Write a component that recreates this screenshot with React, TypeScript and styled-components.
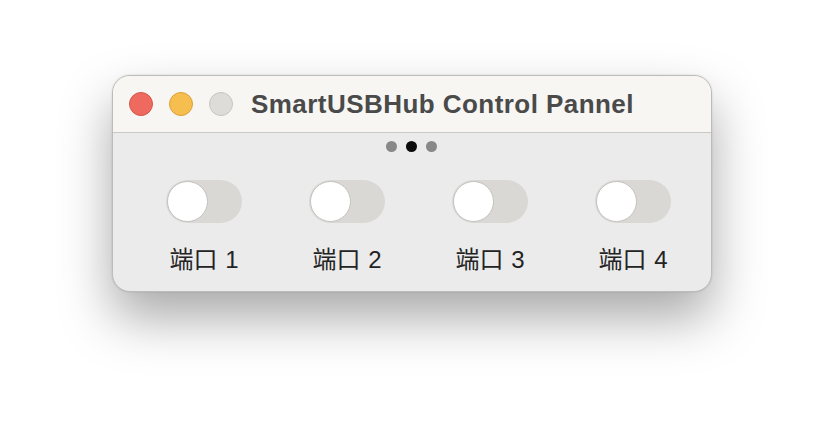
import React, { useState } from 'react';
import styled, { createGlobalStyle } from 'styled-components';

const GlobalStyle = createGlobalStyle`
  html, body {
    margin: 0;
    padding: 0;
    background: #ffffff;
  }
  body {
    font-family: 'Liberation Sans', 'Noto Sans CJK SC', sans-serif;
  }
`;

const Page = styled.div`
  width: 824px;
  height: 440px;
  padding: 75px 0 0 112px;
  box-sizing: border-box;
  overflow: hidden;
`;

const Window = styled.div`
  width: 600px;
  height: 217px;
  box-sizing: border-box;
  border: 1px solid #bdbcba;
  border-radius: 18px;
  overflow: hidden;
  background: #ebebeb;
  box-shadow: 0 26px 52px rgba(0, 0, 0, 0.34), 0 0 2px rgba(0, 0, 0, 0.15);
  display: flex;
  flex-direction: column;
`;

const TitleBar = styled.div`
  height: 56px;
  flex-shrink: 0;
  background: #f7f6f3;
  border-bottom: 1px solid #c9c8c5;
  display: flex;
  align-items: center;
  padding-left: 16px;
`;

const Lights = styled.div`
  display: flex;
  gap: 16px;
  margin-right: 18px;
`;

const Light = styled.span<{ $fill: string; $ring: string }>`
  width: 24px;
  height: 24px;
  border-radius: 50%;
  box-sizing: border-box;
  background: ${(p) => p.$fill};
  border: 1px solid ${(p) => p.$ring};
`;

const Title = styled.div`
  font-family: 'Liberation Sans', sans-serif;
  font-weight: 700;
  font-size: 26px;
  color: #4a4a4a;
  letter-spacing: 0.45px;
`;

const Dots = styled.div`
  display: flex;
  justify-content: center;
  gap: 9px;
  margin-top: 8px;
  padding-right: 2px;
`;

const Dot = styled.span<{ $active?: boolean }>`
  width: 11px;
  height: 11px;
  border-radius: 50%;
  background: ${(p) => (p.$active ? '#0c0c0c' : '#888888')};
`;

const Ports = styled.div`
  display: flex;
  gap: 67px;
  padding-left: 53px;
  margin-top: 28px;
`;

const Port = styled.div`
  width: 76px;
  display: flex;
  flex-direction: column;
  align-items: center;
  gap: 23px;
`;

const Track = styled.button<{ $on: boolean }>`
  width: 76px;
  height: 43px;
  border: none;
  padding: 0;
  border-radius: 22px;
  background: ${(p) => (p.$on ? '#34c759' : '#dad8d4')};
  position: relative;
  cursor: pointer;
`;

const Knob = styled.span<{ $on: boolean }>`
  position: absolute;
  top: 1px;
  left: ${(p) => (p.$on ? '34px' : '1px')};
  width: 41px;
  height: 41px;
  border-radius: 50%;
  box-sizing: border-box;
  background: #ffffff;
  border: 1px solid #c4c2bf;
  transition: left 0.15s;
`;

const Label = styled.div`
  font-family: 'Liberation Sans', 'Noto Sans CJK SC', sans-serif;
  font-size: 24px;
  color: #232323;
  white-space: nowrap;
  line-height: 28px;
  word-spacing: 1px;
`;

export default function App() {
  const [ports, setPorts] = useState([false, false, false, false]);

  const toggle = (i: number) =>
    setPorts((prev) => prev.map((v, idx) => (idx === i ? !v : v)));

  return (
    <>
      <GlobalStyle />
      <Page>
        <Window>
          <TitleBar>
            <Lights>
              <Light $fill="#ee6a5f" $ring="#d5554b" />
              <Light $fill="#f6be4f" $ring="#d9a23c" />
              <Light $fill="#dddcd9" $ring="#c6c5c2" />
            </Lights>
            <Title>SmartUSBHub Control Pannel</Title>
          </TitleBar>
          <Dots>
            <Dot />
            <Dot $active />
            <Dot />
          </Dots>
          <Ports>
            {ports.map((on, i) => (
              <Port key={i}>
                <Track $on={on} onClick={() => toggle(i)}>
                  <Knob $on={on} />
                </Track>
                <Label>端口 {i + 1}</Label>
              </Port>
            ))}
          </Ports>
        </Window>
      </Page>
    </>
  );
}
